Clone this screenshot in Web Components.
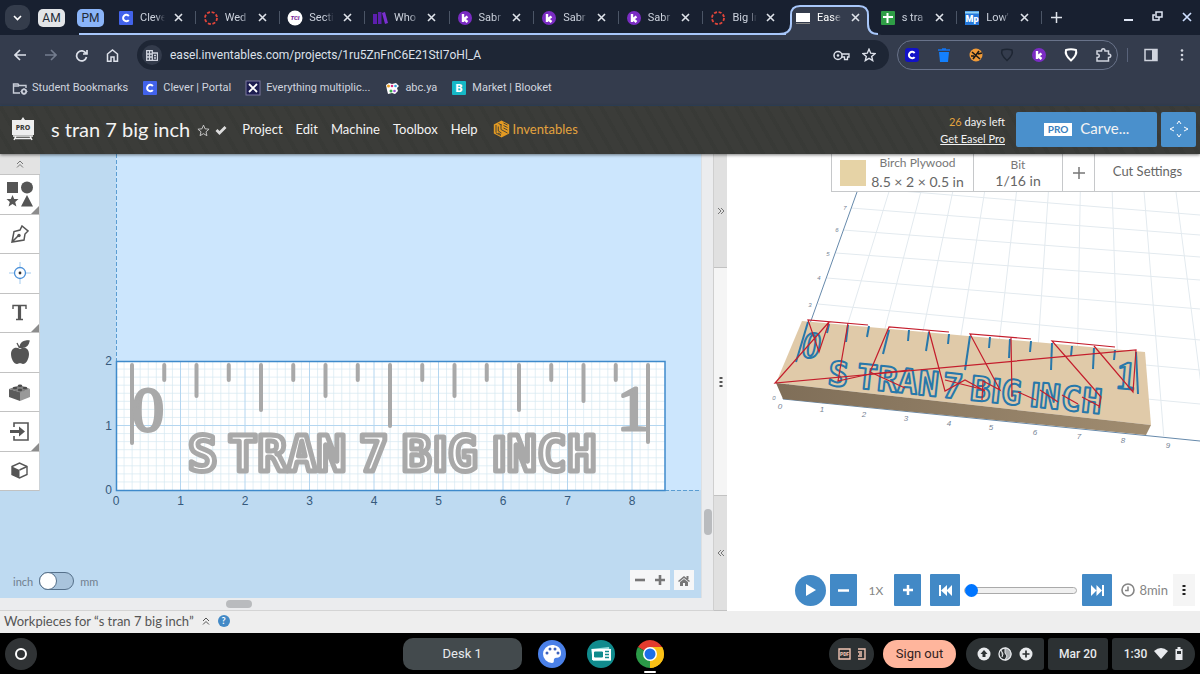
<!DOCTYPE html>
<html lang="en">
<head>
<meta charset="utf-8">
<title>Easel - s tran 7 big inch</title>
<style>
html,body{margin:0}
body{font-family:Roboto,sans-serif;background:#000}
</style>
</head>
<body>
<easel-desktop></easel-desktop>
<script>
const RESET = `*{box-sizing:border-box}
button{appearance:none;border:0;background:none;padding:0;margin:0;font:inherit;color:inherit;display:flex;align-items:center;justify-content:center}
svg{display:block;flex:none}a{color:inherit;text-decoration:none}`;
function define(name, css, html, setup) {
  customElements.define(name, class extends HTMLElement {
    constructor() {
      super();
      const root = this.attachShadow({mode: 'open'});
      const t = document.createElement('template');
      t.innerHTML = `<style>${RESET}${css}</style>` + (typeof html === 'function' ? html(this) : html);
      root.append(t.content.cloneNode(true));
      if (setup) setup.call(this, root);
    }
  });
}

/* ---------- favicons and small icons ---------- */
const purpleK = '<circle cx="7" cy="7" r="7" fill="#7b2cc4"/><path d="M5 3v8M9.500 5.500L6 8l3.500 3" stroke="#fff" stroke-width="2.400" fill="none"/>';
const clever = '<rect width="14" height="14" rx="1" fill="#4263eb"/><path d="M9.800 5A3.200 3.200 0 1 0 9.800 9" fill="none" stroke="#fff" stroke-width="2"/>';
const canvasRing = '<circle cx="7" cy="7" r="6" fill="none" stroke="#e2453a" stroke-width="1.800" stroke-dasharray="3 1.700"/>';
const ICONS = {
  clever, ring: canvasRing, k: purpleK,
  tci: '<circle cx="7" cy="7" r="7.500" fill="#fff"/><text x="7" y="9" text-anchor="middle" font-family="Roboto" font-weight="900" font-style="italic" font-size="6" fill="#7a2a9a">TCI</text>',
  books: '<path d="M0 3h4v10H0zM5 1h3.500v12H5z" fill="#5c1fae"/><path d="M9 2l3-1 3 11-3 1z" fill="#7a30d0"/>',
  easel: '<rect x="0" y="2" width="14" height="9" fill="#fff"/><path d="M0 12.500h14" stroke="#888"/>',
  sheet: '<rect width="14" height="14" rx="1" fill="#2f9e46"/><path d="M2 6h10M6.500 2v10" stroke="#fff" stroke-width="2"/>',
  mp: '<rect width="14" height="14" fill="#2478dc"/><path d="M0 1.500h14" stroke="#8fd2f5" stroke-width="2"/><text x="7" y="11" text-anchor="middle" font-family="Roboto" font-weight="900" font-size="9" fill="#fff">Mp</text>',
  folder: '<path d="M8 12H1.500V3H6l1 1.500h7V7M1 5h6" fill="none" stroke="#c8cdd8" stroke-width="1.400"/><circle cx="12" cy="10.500" r="2.200" fill="none" stroke="#c8cdd8" stroke-width="1.800"/><path d="M12 7v1M12 13v1M8.500 10.500h1M14.500 10.500h1" stroke="#c8cdd8"/>',
  cross: '<rect width="14" height="14" fill="#1d1d50" stroke="#7a769e"/><path d="M3 3l8 8M11 3l-8 8" stroke="#fff" stroke-width="1.800"/>',
  abc: '<path d="M1 4l3-2 3 1 4-1 3 3-2 2 1 3-3 3-3-1-4 1-1-4z" fill="#fff"/><circle cx="3.500" cy="5" r="1.500" fill="#f0a020"/><circle cx="7" cy="5" r="1.300" fill="#d82a80"/><circle cx="10.500" cy="5" r="1.300" fill="#30a0e0"/><circle cx="6" cy="10" r="1.500" fill="#36b04a"/><circle cx="9.500" cy="10" r="1.300" fill="#a04fd0"/>',
  blooket: '<rect width="14" height="14" rx="1" fill="#16b8c6"/><text x="7" y="11" text-anchor="middle" font-family="Roboto" font-weight="900" font-size="11" fill="#fff">B</text>',
  cblue: '<rect width="14" height="14" rx="3" fill="#1212c8"/><path d="M9.600 5A3.200 3.200 0 1 0 9.600 9" fill="none" stroke="#fff" stroke-width="2"/>',
  bin: '<path d="M1 2h12M5 1h4" stroke="#1273f0" stroke-width="1.600"/><path d="M2 4h10l-1 10H3z" fill="#1380ff"/>',
  cookie: '<circle cx="7" cy="7" r="6.500" fill="#f09a38"/><path d="M3 4l8 7M10 3l-6 8M2 8h3M9 6l4-1" stroke="#191919" stroke-width="1.600"/>',
  shieldD: '<path d="M2 2q5-1.500 10 0 1.500 5-5 10.500Q.500 7 2 2z" fill="none" stroke="#1e2633" stroke-width="1.500"/>',
  shieldW: '<path d="M2 2q5-1.500 10 0 1.500 5-5 10.500Q.500 7 2 2z" fill="none" stroke="#fff" stroke-width="2"/>',
  puzzle: '<path d="M1 3h4.500c0-3 3.500-3 3.500 0h3.500v3c3 0 3 3.500 0 3.500V13H1V9.500c3 0 3-3.500 0-3.500z" fill="none" stroke="#d0d4de" stroke-width="1.500"/>',
  panel: '<path d="M1 1.500h12v11H1z" fill="none" stroke="#d0d4de" stroke-width="1.500"/><path d="M8 2h5v10H8z" fill="#d0d4de"/>',
  dots: '<g fill="#d5d9e2"><circle cx="7" cy="2.500" r="1.300"/><circle cx="7" cy="7" r="1.300"/><circle cx="7" cy="11.500" r="1.300"/></g>'
};
define('ui-icon', ':host{display:block;width:14px;height:14px;flex:none}svg{overflow:visible}', el =>
  `<svg width="14" height="14" viewBox="0 0 14 14" aria-hidden="true">${ICONS[el.getAttribute('name')]}</svg>`);

/* ---------- browser ---------- */
define('chrome-tab', `
:host{display:block;position:relative;min-width:0}
.tab{width:100%;height:35px;padding-left:8px;justify-content:flex-start;display:flex;align-items:center;position:relative}
.t{margin-left:7px;width:26px;overflow:hidden;white-space:nowrap;font-size:11px;color:#ccd2dd;-webkit-mask:linear-gradient(90deg,#000 60%,transparent 96%);text-align:left}
.x{width:14px;height:14px;margin-left:5px}
.sep{position:absolute;right:0;top:11px;width:1px;height:13px;background:#4b5566}
:host([quiet]) .sep,:host([active]) .sep{display:none}
.shape{display:none;position:absolute;left:-6px;top:0;overflow:visible}
:host([active]) .shape{display:block}
:host([active]) .t{color:#fff}`,
`<svg class="shape" width="96" height="36" aria-hidden="true"><path d="M-3 35Q10 34 10 24V15Q10 6 19 6H78Q87 6 87 15V24Q87 34 100 35V37H-3z" fill="#343c4d"/><path d="M-3 34Q9 34 9 24V15Q9 6 18 6H77Q86 6 86 15V24Q86 34 96 34" fill="none" stroke="#a8c7fa" stroke-width="2"/></svg>
<div class="tab"><slot name="icon"></slot><span class="t"><slot></slot></span><button class="x" aria-label="Close tab"><svg width="9" height="9" viewBox="0 0 9 9"><path d="M1 1l7 7M8 1L1 8" stroke="#dfe3ea" stroke-width="1.600"/></svg></button></div><span class="sep"></span>`);

const tabs = [['clever','Cleve'],['ring','Wed'],['tci','Secti'],['books','Who'],['k','Sabr'],['k','Sabr'],['k','Sabr'],['ring','Big In'],['easel','Ease'],['sheet','s tra'],['mp','Low\'']];
define('tab-strip', `
:host{display:flex;background:#182030;height:35px;align-items:center;position:relative;padding-left:5px}
:host::after{content:"";position:absolute;left:79px;width:707px;bottom:0;height:2px;background:#a8c7fa}
.menu{width:25px;height:25px;border-radius:9px;background:#343c4b;flex:none}
.chip{height:18px;border-radius:5px;font-size:12px;color:#222a36;width:27px;flex:none}
.am{background:#e3e5e8;margin-left:8px}.pm{background:#8ab4f8;margin-left:12px}
.tabs{flex:0 1 931px;margin-left:7px;display:grid;grid-template-columns:repeat(11,1fr)}
.plus{width:28px;height:32px}
.win{margin-left:auto;display:flex;padding-right:6px;gap:14px}
.win button{width:15px;height:24px}`,
`<button class="menu" aria-label="Search tabs"><svg width="9" height="6" viewBox="0 0 9 6"><path d="M1 1l3.500 3.500L8 1" stroke="#fff" stroke-width="1.600" fill="none"/></svg></button>
<button class="chip am">AM</button><button class="chip pm">PM</button>
<div class="tabs">${tabs.map(([i,t],n)=>`<chrome-tab ${n===8?'active':''} ${n===7?'quiet':''}><ui-icon slot="icon" name="${i}"></ui-icon>${t}</chrome-tab>`).join('')}</div>
<button class="plus" aria-label="New tab"><svg width="11" height="11" viewBox="0 0 11 11"><path d="M5.500 0v11M0 5.500h11" stroke="#dfe3ea" stroke-width="1.500"/></svg></button>
<div class="win"><button aria-label="Minimize"><svg width="11" height="11"><path d="M1 8h9" stroke="#dfe6f4" stroke-width="2"/></svg></button><button aria-label="Restore"><svg width="11" height="15"><path d="M4 2h6v5H4zM3 5H1v5h6V7" stroke="#dfe6f4" stroke-width="1.500" fill="none"/></svg></button><button aria-label="Close"><svg width="10" height="12"><path d="M1 1l8 8M9 1L1 9" stroke="#cfe0ff" stroke-width="1.700"/></svg></button></div>`);

define('browser-toolbar', `
:host{display:flex;height:40px;background:#343c4d;align-items:center;padding:0 5px 0 4px}
.n{width:31px;height:30px;flex:none}
.omni{display:flex;flex:1;align-items:center;height:30px;border-radius:15px;background:#1e2635;margin-left:9px;padding:0 6px 0 5px;min-width:0}
.site{width:20px;height:20px;border-radius:10px;background:#333b4b}
input{flex:1;min-width:0;border:0;outline:0;background:none;color:#dde1ea;font:12px Roboto,sans-serif;padding:0 0 0 8px;height:28px}
.o{width:28px;height:28px}
.ext{display:flex;align-items:center;margin-left:8px;height:30px;border:1px solid #69738a;border-radius:15px;padding:0 7px;width:221px;justify-content:space-between}
.bar{width:1px;height:14px;background:#59637a;margin:0 9px 0 9px}
.e{width:27px;height:28px}.e+.e{margin-left:4px}`,
`<button class="n" aria-label="Back"><svg width="12" height="12"><path d="M6 1L1 6l5 5M1 6h11" stroke="#dde1ea" stroke-width="1.600" fill="none"/></svg></button>
<button class="n" aria-label="Forward"><svg width="12" height="12"><path d="M6 1l5 5-5 5M11 6H0" stroke="#737c8e" stroke-width="1.600" fill="none"/></svg></button>
<button class="n" aria-label="Reload"><svg width="13" height="13"><path d="M11 4.500A5 5 0 1 0 11.500 8M12 1v4H8" stroke="#dde1ea" stroke-width="1.700" fill="none"/></svg></button>
<button class="n" aria-label="Home"><svg width="13" height="13"><path d="M1.500 12.200V5l5-4 5 4v7.200H8V8H5v4.200z" stroke="#dde1ea" stroke-width="1.500" fill="none"/></svg></button>
<div class="omni"><button class="site" aria-label="Site information"><svg width="12" height="11"><path d="M.7.7h5.600v9.600H.7zM6 3h5.500v7.300H6M1 4h5M1 7h5M3.500 1v9M8 5.500h2M8 8h2" stroke="#d0d4de" stroke-width="1.300" fill="none"/></svg></button>
<input type="text" aria-label="Address" value="easel.inventables.com/projects/1ru5ZnFnC6E21StI7oHl_A">
<button class="o" aria-label="Passwords"><svg width="17" height="11"><circle cx="5" cy="5.500" r="4" stroke="#dde1ea" stroke-width="1.500" fill="none"/><circle cx="5" cy="5.500" r="1.300" fill="#dde1ea"/><path d="M9 4h7v3h-1.500v2.500h-3V7H9" fill="none" stroke="#dde1ea" stroke-width="1.300"/></svg></button>
<button class="o" aria-label="Bookmark this tab"><svg width="14" height="14" viewBox="0 0 14 14"><path d="M7 1.200l1.700 4 4.300.4-3.300 2.800 1 4.200L7 10.400l-3.700 2.200 1-4.200L1 5.600l4.300-.4z" stroke="#dde1ea" stroke-width="1.400" fill="none"/></svg></button></div>
<div class="ext">${['cblue','bin','cookie','shieldD','k','shieldW','puzzle'].map(n=>`<ui-icon name="${n}"></ui-icon>`).join('')}</div><span class="bar"></span>
<button class="e" aria-label="Side panel"><ui-icon name="panel"></ui-icon></button><button class="e" aria-label="Menu"><ui-icon name="dots"></ui-icon></button>`);

define('bookmarks-bar', `
:host{display:flex;height:31px;background:#343c4d;padding:0 12px 5px;align-items:center;gap:15px;font-size:11px;color:#d0d5df;border-bottom:1px solid #2e425a}
a{display:flex;align-items:center;gap:6px;white-space:nowrap}`,
[['folder','Student Bookmarks'],['clever','Clever | Portal'],['cross','Everything multiplic...'],['abc','abc.ya'],['blooket','Market | Blooket']].map(([i,t])=>`<a href="#"><ui-icon name="${i}"></ui-icon>${t}</a>`).join(''));

/* ---------- Easel header ---------- */
define('easel-header', `
:host{display:flex;height:48px;align-items:center;padding:0 4px 0 12px;color:#f3f3f3;font-family:Lato,sans-serif;font-size:13px;white-space:nowrap;position:relative;z-index:1;
background:repeating-linear-gradient(60deg,transparent 0 9px,rgba(20,28,22,.07) 9px 13px),#3b3c39;box-shadow:0 1px 3px rgba(0,0,0,.5)}
h1{font-size:20px;font-weight:400;margin:0 7px 0 17px;line-height:24px;padding-bottom:2px}
nav{display:flex;gap:13px;margin-left:15px;align-items:center;padding-bottom:3px}
.inv{display:flex;align-items:center;gap:3px;color:#e3a33e;margin-left:2px}
.st{margin-right:5px}
.trial{margin-left:auto;text-align:right;font-size:11px;line-height:17px;margin-right:11px}
.trial b{font-weight:400;color:#e3a33e}.trial a{text-decoration:underline}
.carve{width:141px;height:35px;background:#4a90cc;border-radius:2px;font-size:15px;gap:8px;margin-right:4px;margin-top:-2px;padding-bottom:2px}
.pro{background:#fff;color:#3a80bd;font-weight:700;font-size:10px;line-height:13px;padding:0 4px;margin-top:2px}
.jog{width:35px;height:35px;background:#4a90cc;border-radius:2px;margin-top:-2px}`,
`<svg width="22" height="26" viewBox="0 0 22 26" aria-hidden="true"><path d="M11 0l2 3H9zM0 3h22v15H0z" fill="#eee"/><path d="M1 19h20M4 19l-2 4M18 19l2 4M3 21.500h16" stroke="#eee" stroke-width="1.500"/><text x="11" y="13" text-anchor="middle" font-family="Noto Sans" font-size="7" font-weight="800" fill="#3b3c39">PRO</text></svg>
<h1>s tran 7 big inch</h1>
<button class="st" aria-label="Favorite"><svg width="13" height="13" viewBox="0 0 14 14"><path d="M7 1.200l1.700 4 4.300.4-3.300 2.800 1 4.200L7 10.400l-3.700 2.200 1-4.200L1 5.600l4.300-.4z" stroke="#ccc" fill="none"/></svg></button>
<svg width="12" height="10" aria-label="Saved"><path d="M1.500 5l3 3L10.500 2" stroke="#ddd" stroke-width="2.800" fill="none"/></svg>
<nav>${['Project','Edit','Machine','Toolbox','Help'].map(t=>`<button>${t}</button>`).join('')}
<a class="inv" href="#"><svg width="17" height="18" viewBox="0 0 17 18"><path d="M8.500.500l7.700 4v9l-7.700 4-7.700-4v-9z" fill="#e39a22"/><path d="M3 5v7.500M5.300 6.500V11l3.200 2M8 4v5.500l6.500 3.500M5.500 3.500l3 1.500M10.500 3l4 2M10.500 5.500l4 2M10.500 8l4 2M3 13l5 2.500M5 13L8 14.500" stroke="#3b3c39" stroke-width=".9" fill="none"/></svg>Inventables</a></nav>
<div class="trial"><div><b>26</b> days left</div><a href="#">Get Easel Pro</a></div>
<button class="carve"><span class="pro">PRO</span>Carve...</button>
<button class="jog" aria-label="Jog machine"><svg width="20" height="20"><path d="M8 5l2-3 2 3M8 15l2 3 2-3M5 8l-4 2 4 2M15 8l4 2-4 2" stroke="#fff" fill="none"/></svg></button>`);

/* ---------- design side ---------- */
const G = '#555';
const tools = [
 ['Shapes',`<svg width="27" height="27"><path d="M1 1h11v11H1z" fill="${G}"/><circle cx="21" cy="6.500" r="6" fill="${G}"/><path d="M6.500 14l1.700 4h4.300l-3.300 3 1.200 4.500-3.900-2.500-3.900 2.500L3.800 21 .5 18h4.300zM21 14l6 11.500H15z" fill="${G}"/></svg>`,1],
 ['Pen',`<svg width="18" height="18" viewBox="0 0 18 18"><path d="M1 17L3 6.500l6-1.500L11 1l6 5-3 3-1 6zM1.500 16.500l6-6" fill="none" stroke="${G}" stroke-width="1.500"/><circle cx="8" cy="10.500" r="1.700" fill="${G}"/></svg>`],
 ['Drill point',`<svg width="22" height="22"><circle cx="11" cy="11" r="5.500" fill="none" stroke="#4a90d9" stroke-width="1.300"/><path d="M11 0v5M11 17v5M0 11h5M17 11h5" stroke="#a4cbee"/><circle cx="11" cy="11" r="1.400" fill="#333"/></svg>`],
 ['Text',`<svg width="16" height="17"><path d="M1 5V1.500h13V5M7.500 1.500v14M4 15.500h7" stroke="${G}" fill="none" stroke-width="1.400"/><path d="M7.500 1v15" stroke="${G}" stroke-width="3.200"/></svg>`,1],
 ['Icons',`<svg width="20" height="24"><path d="M10 9C5 6 1 9 1 14s3 10 6 10c1.500 0 1.500-.7 3-.7s1.500.7 3 .7c3 0 6-5 6-10s-4-8-9-5z" fill="${G}"/><path d="M10 8C10 3 14 0 19 1 18 6 15 8 10 7zM9.500 8L7 3" fill="${G}" stroke="${G}" stroke-width="1.300"/></svg>`],
 ['Apps',`<svg width="23" height="18" viewBox="0 0 23 18"><path d="M1 6l11 3v9L1 14z" fill="#5b5b5b"/><path d="M12 9l10-3v8l-10 4z" fill="#999"/><path d="M1 6l11-4 10 4-10 3.500z" fill="#808080"/><g fill="#4a4a4a"><ellipse cx="7" cy="5" rx="2.200" ry="1.300"/><ellipse cx="12" cy="2.700" rx="2.200" ry="1.300"/><ellipse cx="12" cy="7" rx="2.200" ry="1.300"/><ellipse cx="17" cy="5" rx="2.200" ry="1.300"/></g></svg>`],
 ['Import',`<svg width="19" height="19"><path d="M4 5V1h14v17H4v-4" fill="none" stroke="${G}" stroke-width="1.600"/><path d="M0 9.500h10" stroke="${G}" stroke-width="3"/><path d="M9 4.500l6 5-6 5z" fill="${G}"/></svg>`,1],
 ['3D object',`<svg width="17" height="17"><path d="M1 4.500l7.500-3.500L16 4.500v8L8.500 16 1 12.500z" fill="#fff" stroke="${G}" stroke-width="1.400"/><path d="M1 4.500L8.500 8v8L1 12.500z" fill="${G}"/><path d="M8.500 8L16 4.500" stroke="${G}" stroke-width="1.400"/></svg>`]];
define('tool-palette', `
:host{display:block;width:40px}
.c{height:21px;width:100%;background:#e3e3e3;border-bottom:1px solid #c4c4c4}
.g{display:grid;grid-template-rows:repeat(8,1fr);height:316px}
.g button{width:100%;background:#fff;border-bottom:1px solid #c2c2c2;border-right:1px solid #cdd3d8;position:relative}
i{position:absolute;right:0;bottom:0;border:4px solid #8c8c8c;border-left-color:transparent;border-top-color:transparent}`,
`<button class="c" aria-label="Collapse tools"><svg width="8" height="8"><path d="M1 4l3-3 3 3M1 7.500l3-3 3 3" stroke="#777" fill="none"/></svg></button><div class="g">${tools.map(([l,s,m])=>`<button aria-label="${l}">${s}${m?'<i></i>':''}</button>`).join('')}</div>`);

function boardSvg() {
  const X = 116, Y = 490, P = 64.5;
  let s = '';
  for (let i = 1; i < 68; i++) if (i % 8) s += `<path d="M${X+i*P/8} 362V490" stroke="#d5e8f0" stroke-width=".7"/>`;
  for (let i = 1; i < 16; i++) if (i % 8) s += `<path d="M116 ${Y-i*P/8}H665" stroke="#d5e8f0" stroke-width=".7"/>`;
  for (let i = 1; i < 9; i++) s += `<path d="M${X+i*P} 362V490" stroke="#b4d6f0"/>`;
  s += '<path d="M116 425.500H665" stroke="#b4d6f0"/>';
  const ends = [444,381,397,381,411,381,397,381,427,381,397,381,411,381,402,381,443];
  let t = ends.map((e, i) => `<path d="M${132+i*P/2} 365V${e-1}"/>`).join('');
  let n = '';
  for (let i = 0; i < 9; i++) n += `<text x="${X+i*P}" y="505" text-anchor="middle">${i}</text>`;
  for (let i = 0; i < 3; i++) n += `<text x="112" y="${494-i*64.5}" text-anchor="end">${i}</text>`;
  return `<svg class="cv" viewBox="40 154 661 444" preserveAspectRatio="xMinYMin slice">
  <path d="M40 154H701V598H40z" fill="#bedaf1"/><path d="M116 154H701V490H116z" fill="#cce6fd"/>
  <path d="M116.500 154V361M665 490.500H701" stroke="#5b9dd2" stroke-dasharray="4 2"/>
  <rect x="116.500" y="361.500" width="548.500" height="129" fill="#fff"/>${s}
  <rect x="116.500" y="361.500" width="548.500" height="129" fill="none" stroke="#3f8acb" stroke-width="1.500"/>
  <g stroke="#a9a9a9" stroke-width="4" stroke-linecap="round">${t}</g>
  <g fill="#a9a9a9" stroke="#a9a9a9" stroke-linejoin="round" font-family="Liberation Serif" font-size="64" stroke-width="3"><text x="132" y="431">0</text><text x="617" y="430">1</text></g>
  <g fill="#fff" stroke="#a9a9a9" stroke-width="5" stroke-linejoin="round">
   <g font-family="DejaVu Sans Mono" font-weight="700" font-size="49"><text x="188" y="471">S</text><text x="228" y="471">TRAN</text><text x="359" y="471">7</text>
   <text y="471"><tspan x="402">B</tspan><tspan x="433" font-family="Roboto">I</tspan><tspan x="448">G</tspan></text>
   <text y="471"><tspan x="492" font-family="Roboto">I</tspan><tspan x="507">N</tspan><tspan x="537">C</tspan><tspan x="567">H</tspan></text></g></g>
  <g font-family="Liberation Sans" font-size="12" fill="#35597c">${n}</g></svg>`;
}
define('design-canvas', `
:host{display:grid;grid-template-columns:1fr 12px;grid-template-rows:1fr 13px;background:#ebecee;min-width:0}
.area{display:flex;position:relative;background:#bedaf1;min-height:0}
.wrap{flex:1;min-width:0;position:relative;overflow:hidden}
.cv{width:100%;height:100%;min-height:444px}
.unit{position:absolute;left:13px;bottom:8px;display:flex;align-items:center;gap:6px;color:#71808f;font-family:Lato,sans-serif;font-size:11px}
input{appearance:none;margin:0;width:35px;height:18px;border-radius:9px;border:1px solid #55708a;background:#a9c4dc;position:relative}
input::before{content:"";position:absolute;left:-1px;top:-1px;width:18px;height:18px;border-radius:50%;background:#fff;border:1px solid #55708a;box-sizing:border-box}
.zoom{position:absolute;right:7px;bottom:8px;display:flex;gap:4px}
.zoom>*{background:#f5f6f7;height:20px}.zoom div{display:flex}.zoom button{width:20px;height:20px}
.vs{display:grid;justify-content:center;grid-template-rows:354fr 26px 63fr;border-left:1px solid #dcdfe2}
.vs i{grid-row:2;width:8px;border-radius:4px;background:#b9bbbe}
.hs{grid-column:1/3;display:grid;grid-template-columns:226fr 26px 461fr;align-items:center;border-bottom:1px solid #d4d4d4}
.hs i{grid-column:2;height:8px;border-radius:4px;background:#b9bbbe}`,
`<div class="area"><tool-palette></tool-palette><div class="wrap">${boardSvg()}</div>
<div class="unit"><label for="u">inch</label><input id="u" type="checkbox" role="switch"><label for="u">mm</label></div>
<div class="zoom"><div><button aria-label="Zoom out"><svg width="10" height="10"><path d="M0 5h10" stroke="#777" stroke-width="2.600"/></svg></button><button aria-label="Zoom in"><svg width="10" height="10"><path d="M0 5h10M5 0v10" stroke="#777" stroke-width="2.600"/></svg></button></div><button aria-label="Fit view"><svg width="12" height="11"><path d="M0 6l6-5 6 5-1 1-5-4-5 4zM2 7l4-3 4 3v4H7V8H5v3H2zM8.500 1h2v3h-2z" fill="#777"/></svg></button></div></div>
<div class="vs"><i></i></div><div class="hs"><i></i></div>`);

define('pane-divider', `
:host{display:flex;flex-direction:column;border-left:1px solid #cfcfcf;background:#f5f5f5;width:14px}
button{width:100%;background:#e0e0e0}.a{flex:114;border-bottom:1px solid #c2c2c2}.m{flex:228;background:#f5f5f5}.b{flex:115;border-top:1px solid #c2c2c2;border-bottom:1px solid #c2c2c2}`,
`<button class="a" aria-label="Expand design"><svg width="8" height="8"><path d="M1 1l3 3-3 3M4 1l3 3-3 3" stroke="#777" fill="none"/></svg></button>
<button class="m" aria-label="Resize"><svg width="4" height="12"><path d="M.5 1h3v2h-3zM.5 5h3v2h-3zM.5 9h3v2h-3z" fill="#555"/></svg></button>
<button class="b" aria-label="Expand preview"><svg width="8" height="8"><path d="M4 1L1 4l3 3M7 1L4 4l3 3" stroke="#777" fill="none"/></svg></button>`);

/* ---------- preview side ---------- */
define('material-bar', `
:host{display:grid;grid-template-columns:141px 89px 32px 1fr;grid-template-rows:100%;box-sizing:border-box;height:38px;border:solid #c6c8ca;border-width:0 0 1px 1px;margin-left:auto;width:369px;font-family:Lato,sans-serif;color:#777;background:#fff;white-space:nowrap}
.c{flex-direction:column;font-size:12px;line-height:16px;border-left:1px solid #c6c8ca}
.c b{font-weight:400;font-size:14px;line-height:16px;color:#666}
.m{border-left:0;display:grid;grid-template-columns:26px 1fr;padding:0 6px 0 8px;gap:0 2px}.m svg{grid-row:1/3}
.p{border-left:1px solid #c6c8ca}.s{font-size:13px;color:#666;padding-bottom:4px}`,
`<button class="c m"><svg width="26" height="26"><path d="M0 0h26v26H0z" fill="#e6d3a6"/></svg><span>Birch Plywood</span><b>8.5 × 2 × 0.5 in</b></button>
<button class="c"><span>Bit</span><b>1/16 in</b></button>
<button class="p" aria-label="Add bit"><svg width="12" height="12"><path d="M0 6h12M6 0v12" stroke="#777" stroke-width="1.500"/></svg></button>
<button class="p s">Cut Settings</button>`);

function sceneSvg() {
  let g = '';
  for (let k = 1; k <= 10; k++) {
    const a = 857+31.9*k, b = 818+37.2*k, m = (b-a)/108;
    g += `<path d="M${a} 192L${b+m*(100+4*k)} ${400+4*k}"/>`;
  }
  [[888,190,215],[851,208,235],[843,230,257],[836,253,280],[827,278,309],[818,304,340],[806,334,370],[795,366,404]].forEach(r => g += `<path d="M${r[0]} ${r[1]}L1200 ${r[2]}"/>`);
  const low = [[780,409],[822,412],[864,417],[906,421],[949,426],[991,430],[1035,435],[1079,439],[1123,443],[1168,448]];
  const left = [[774,400,0],[810,307,3],[819,280,4],[828,256,5],[837,232,6],[845,210,7]];
  const lab = low.map((p,i) => `<text x="${p[0]}" y="${p[1]}" font-size="8">${i}</text>`).join('') + left.map(p => `<text x="${p[0]}" y="${p[1]}" font-size="6">${p[2]}</text>`).join('');
  const cuts = ['M808 322L796 362','M829 324L827 333','M848 325L846 342','M869 326L867 337','M889 330L883 354','M909 330L908 341','M929 332L926 351','M949 334L948 344','M970 336L965 370','M990 337L989 348','M1010 339L1009 358','M1031 341L1030 352','M1052 343L1051 370','M1072 346L1071 356','M1094 348L1093 369','M1115 350L1114 360','M1136 352L1138 394'];
  return `<svg class="sc" viewBox="727 192 473 374" preserveAspectRatio="xMaxYMin slice" aria-label="3D preview">
  <defs><linearGradient id="side"><stop stop-color="#7f6e58"/><stop offset="1" stop-color="#a08c70"/></linearGradient></defs>
  <g stroke="#e3eaef" fill="none">${g}</g>
  <path d="M857 192L783 399L1200 441" fill="none" stroke="#6689ab"/>
  <path d="M802 321L1145 352L1151 425L776 383z" fill="#e0caa9"/>
  <path d="M776 383L1151 425L1146 435L783 399z" fill="url(#side)"/>
  <g stroke="#2878aa" stroke-width="2" fill="none" stroke-linejoin="round">${cuts.map(d=>`<path d="${d}"/>`).join('')}
   <g font-family="DejaVu Sans Mono" font-weight="700" font-size="34" transform="translate(827 385) rotate(6)"><text x="0" y="0">S</text><text x="29" y="0">TRAN</text><text x="115" y="0">7</text>
   <text y="0"><tspan x="143">B</tspan><tspan x="164" font-family="Roboto">I</tspan><tspan x="174">G</tspan><tspan x="203" font-family="Roboto">I</tspan><tspan x="213">N</tspan><tspan x="234">C</tspan><tspan x="255">H</tspan></text></g>
   <text x="802" y="358" font-family="Liberation Serif" font-style="italic" font-weight="700" font-size="37">0</text><text x="0" y="0" font-family="Liberation Serif" font-weight="700" font-size="40" transform="translate(1115 388) rotate(5)">1</text></g>
  <g stroke="#c41d2c" fill="none" stroke-width="1.200"><path d="M868 325L808 320L819 352L829 322L775 383L1136 350L1133 392L1094 346"/><path d="M848 323L838 381L870 374L910 370M949 332L889 327L870 372L905 388M929 331L945 391L965 380L985 391M945 380L985 390"/><path d="M1031 339L970 334L1000 390L983 381L982 400M1011 338L1012 397M1018 392L1036 400M1040 390L1058 402M1062 395L1078 404M1082 397L1099 406M1115 347L1052 341L1101 397L1099 408"/></g>
  <g font-family="Liberation Sans" font-style="italic" text-anchor="middle" fill="#768495">${lab}</g></svg>`;
}
define('play-bar', `
:host{display:flex;box-sizing:border-box;align-items:center;justify-content:flex-end;height:45px;padding:3px 5px 0 0;font-family:Lato,sans-serif;color:#858585}
.b{background:#4289c6;height:32px;width:27px;border-radius:1px}.w{width:30px}
.r{width:31px;height:31px;border-radius:50%;background:#4289c6;margin-right:4px}
.sp{width:37px;text-align:center;font-size:12px}.l{margin-left:9px}
input{appearance:none;width:113px;height:14px;margin:0 5px 0 4px;background:none}
input::-webkit-slider-runnable-track{height:7px;border:1px solid #aaa;border-radius:4px;background:#f0f0f0}
input::-webkit-slider-thumb{appearance:none;width:13px;height:13px;border-radius:50%;background:#0075ff;margin-top:-4px}
time{display:flex;align-items:center;gap:4px;font-size:13px;margin-left:9px;margin-right:5px}
.d{width:22px;height:32px;background:#f5f5f5}`,
`<button class="r" aria-label="Play"><svg width="10" height="12"><path d="M0 0l10 6-10 6z" fill="#fff"/></svg></button>
<button class="b" aria-label="Slower"><svg width="11" height="11"><path d="M0 5.500h11" stroke="#fff" stroke-width="2.500"/></svg></button><span class="sp">1X</span>
<button class="b" aria-label="Faster"><svg width="10" height="10"><path d="M0 5h10M5 0v10" stroke="#fff" stroke-width="2.500"/></svg></button>
<button class="b w l" aria-label="Rewind"><svg width="13" height="11"><path d="M0 0h2v11H0zM8 0v11L2 5.500zM13 0v11L7.500 5.500z" fill="#fff"/></svg></button>
<input type="range" min="0" max="100" value="0" aria-label="Simulation position">
<button class="b w" aria-label="Skip to end"><svg width="13" height="11"><path d="M11 0h2v11h-2zM0 0v11l5.500-5.500zM5.500 0v11L11 5.500z" fill="#fff"/></svg></button>
<time><svg width="14" height="14"><circle cx="7" cy="7" r="6" stroke="#858585" stroke-width="1.600" fill="none"/><path d="M7 3.500v4H4" stroke="#858585" stroke-width="1.500" fill="none"/></svg>8min</time>
<button class="d" aria-label="More"><svg width="4" height="12"><path d="M.5 1h3v2h-3zM.5 5h3v2h-3zM.5 9h3v2h-3z" fill="#222"/></svg></button>`);
define('preview-pane', `:host{display:flex;flex-direction:column;background:#fff;min-width:0}.v{flex:1;min-height:374px;overflow:hidden}.sc{width:100%;height:100%;min-height:374px}`,
`<material-bar></material-bar><div class="v">${sceneSvg()}</div><play-bar></play-bar>`);

define('workpiece-bar', `
:host{display:flex;box-sizing:border-box;height:22px;align-items:center;background:#eee;color:#555;font-family:Lato,sans-serif;font-size:13px;padding:0 4px 3px;gap:8px}
.h{width:12px;height:12px;border-radius:50%;background:#4289c6;color:#fff;font-size:9px;font-weight:700}`,
`<span>Workpieces for “s tran 7 big inch”</span><button aria-label="Expand"><svg width="8" height="8"><path d="M1 4l3-3 3 3M1 7.500l3-3 3 3" stroke="#555" fill="none"/></svg></button><button class="h">?</button>`);

/* ---------- shelf ---------- */
define('os-shelf', `
:host{display:flex;align-items:center;height:41px;padding:0 5px;background:#000;color:#e8eaed;font-size:12px;font-weight:500}
.l{width:32px;height:32px;border-radius:50%;background:#303335}
.s1{flex:365}.s2{flex:165}
.desk{width:119px;height:32px;border-radius:10px;background:#434a4d;font-size:13px;font-weight:400}
.app{width:28px;height:41px;position:relative;margin-left:21px}.desk+.app{margin-left:16px}
.run::after{content:"";position:absolute;bottom:1px;left:8px;width:12px;height:2px;background:#fff;border-radius:1px}
.p{height:32px;background:#2c3133}
.tray{width:45px;border-radius:16px;gap:6px;margin-right:9px}
.out{width:73px;height:28px;border-radius:14px;background:#ffb59c;color:#33211c;font-size:13px;font-weight:400;margin-right:10px}
.st{width:78px;border-radius:16px 3px 3px 16px;gap:7px;margin-right:4px}.dt{width:60px;border-radius:3px;margin-right:4px}.tm{width:83px;border-radius:3px 16px 16px 3px;gap:7px}`,
`<button class="l" aria-label="Launcher"><svg width="14" height="14"><circle cx="7" cy="7" r="5" fill="none" stroke="#fff" stroke-width="2"/></svg></button><span class="s1"></span>
<button class="desk">Desk 1</button>
<button class="app" aria-label="Canvas"><svg width="28" height="28"><circle cx="14" cy="14" r="14" fill="#4a80e8"/><path d="M14 5a9 9 0 1 0 0 18c3 0 1-3 2.500-4.500S23 19 23 13s-5-8-9-8z" fill="#fff"/><g fill="#3d62bd"><circle cx="9" cy="13" r="1.500"/><circle cx="12" cy="9" r="1.500"/><circle cx="17" cy="9" r="1.500"/><circle cx="20" cy="13" r="1.500"/></g></svg></button>
<button class="app" aria-label="Screencast"><svg width="28" height="28"><circle cx="14" cy="14" r="14" fill="#108b8d"/><path d="M4 9l18-2 2 14H6z" fill="#9ee2df"/><path d="M5 9h19v11H5z" fill="#fff"/><path d="M7.500 12h8v5h-8z" fill="#108b8d" stroke="#108b8d"/><path d="M18 11.500h4M18 14.500h4M18 17.500h4" stroke="#108b8d" stroke-width="1.300"/></svg></button>
<button class="app run" aria-label="Chrome"><svg width="28" height="28" viewBox="0 0 28 28"><path d="M14 14L1.900 7A14 14 0 0 1 26.100 7z" fill="#e33b2e"/><path d="M14 14L26.100 7A14 14 0 0 1 14 28z" fill="#fbc116"/><path d="M14 14v14A14 14 0 0 1 1.900 7z" fill="#2b9a47"/><path d="M14 7h12.100A14 14 0 0 1 14 28l6-10.500z" fill="#fbc116"/><circle cx="14" cy="14" r="7" fill="#fff"/><circle cx="14" cy="14" r="5.500" fill="#1c6ee8"/></svg></button>
<span class="s2"></span>
<button class="p tray" aria-label="Recent files"><svg width="13" height="12"><path d="M1 1h11v10H1z" fill="none" stroke="#f0c4b2" stroke-width="1.400"/><text x="6.500" y="8" text-anchor="middle" font-size="5" font-weight="900" fill="#f0c4b2">PDF</text></svg><svg width="9" height="12"><path d="M1 1h7v10H1M1 4h4M2 6h3M1 8h4" fill="none" stroke="#f0c4b2" stroke-width="1.400"/></svg></button>
<button class="out">Sign out</button>
<button class="p st" aria-label="Notifications"><svg width="14" height="14"><circle cx="7" cy="7" r="6.500" fill="#e8eaed"/><path d="M7 3l3.500 4H8.500v3h-3V7h-2z" fill="#2c3133"/></svg><svg width="14" height="14"><circle cx="7" cy="7" r="6" fill="none" stroke="#e8eaed" stroke-width="1.300"/><path d="M7 1a6 6 0 0 1 0 12l2-4-2-3zM3 3l2 4-1 3" fill="#a9adb0" stroke="#e8eaed"/></svg><svg width="14" height="14"><circle cx="7" cy="7" r="6.500" fill="#e8eaed"/><path d="M7 3.500v7M3.500 7h7" stroke="#2c3133" stroke-width="1.700"/></svg></button>
<button class="p dt">Mar 20</button>
<button class="p tm">1:30<svg width="14" height="11"><path d="M0 3Q7-3 14 3L7 11z" fill="#e8eaed"/></svg><svg width="8" height="13"><path d="M2.500 0h3v2h2v11h-7V2h2z" fill="#e8eaed"/><path d="M2 4h4v3H2z" fill="#2c3133"/></svg></button>`);

define('easel-desktop', `
:host{display:flex;flex-direction:column;min-height:100vh}
main{flex:1;display:grid;grid-template-columns:713fr 14px 473fr;min-height:457px}`,
`<tab-strip></tab-strip><browser-toolbar></browser-toolbar><bookmarks-bar></bookmarks-bar><easel-header></easel-header>
<main><design-canvas></design-canvas><pane-divider></pane-divider><preview-pane></preview-pane></main>
<workpiece-bar></workpiece-bar><os-shelf></os-shelf>`);
</script>
</body>
</html>
